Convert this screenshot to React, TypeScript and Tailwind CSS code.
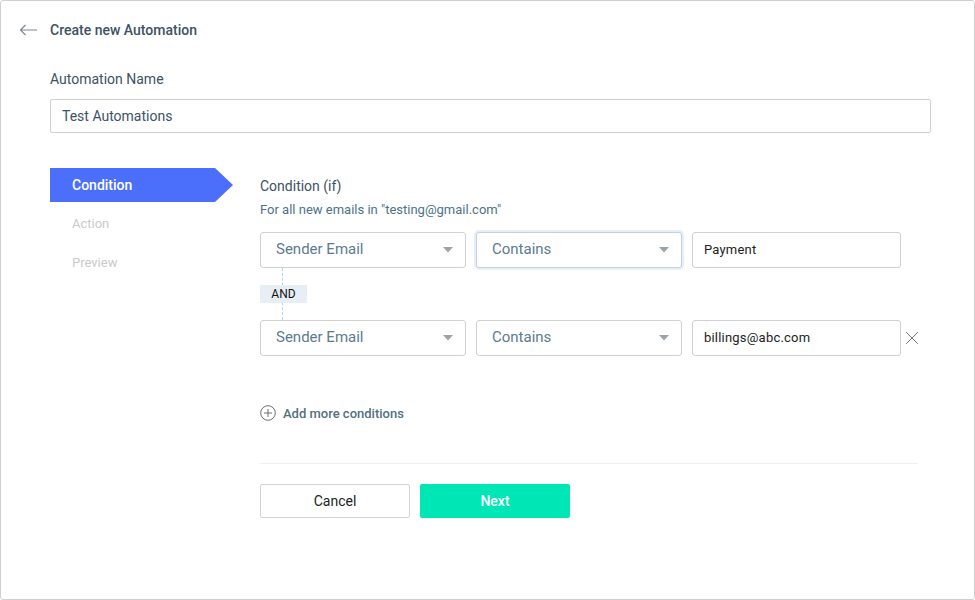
import { X } from "lucide-react";

function Caret() {
  return (
    <svg width="10" height="6" viewBox="0 0 10 6" className="shrink-0">
      <path d="M0 0 L10 0 L5 5.5 Z" fill="#9aa3a9" />
    </svg>
  );
}

function Select({ label, focused }: { label: string; focused?: boolean }) {
  return (
    <div
      className={
        "flex h-9 w-[206px] shrink-0 items-center justify-between rounded-[3px] border bg-white pl-[15px] pr-[12px] text-[15px] text-[#5b7b8e] " +
        (focused ? "border-[#c9cfd4] shadow-[0_0_0_2px_#e3effc]" : "border-[#d0d0d0]")
      }
    >
      <span>{label}</span>
      <Caret />
    </div>
  );
}

function TextBox({ value }: { value: string }) {
  return (
    <div className="flex h-9 w-[209px] shrink-0 items-center rounded-[3px] border border-[#d0d0d0] bg-white px-[11px] text-[13px] tracking-[0.2px] text-[#222]">
      {value}
    </div>
  );
}

export default function App() {
  return (
    <div className="h-[600px] w-[975px] bg-white font-['Roboto','Liberation_Sans',sans-serif]">
      <div className="h-full w-full rounded-[3px] border border-[#cfcfcf] bg-white">
        {/* header */}
        <div className="flex h-[58px] items-center pl-[18px]">
          <svg width="19" height="12" viewBox="0 0 19 12" fill="none">
            <path d="M18 6 H1.5 M6.5 1 L1.5 6 L6.5 11" stroke="#7d8a92" strokeWidth="1.2" />
          </svg>
          <h1 className="ml-[12px] text-[14px] font-medium text-[#3d5262]">Create new Automation</h1>
        </div>

        <div className="pl-[49px] pr-[43px]">
          <div className="mt-[10px] text-[14px] text-[#3d5262]">Automation Name</div>
          <div className="mt-[9px] flex h-[34px] items-center rounded-[2px] border border-[#cfcfcf] px-[11px] text-[14px] text-[#3d5262]">
            Test Automations
          </div>
        </div>

        <div className="mt-[35px] flex pl-[49px]">
          {/* steps */}
          <div className="w-[210px] shrink-0">
            <div className="flex h-[34px] w-[183px] items-center bg-[#4b6ffa] pl-[22px] text-[14px] font-medium text-white [clip-path:polygon(0_0,165px_0,183px_50%,165px_100%,0_100%)]">
              Condition
            </div>
            <div className="mt-[12px] pl-[22px] text-[13px] text-[#c9cacb]">Action</div>
            <div className="mt-[19px] pl-[22px] text-[13px] text-[#c9cacb]">Preview</div>
          </div>

          {/* conditions */}
          <div className="w-[658px]">
            <div className="mt-[8px] text-[14px] text-[#3d5262]">Condition (if)</div>
            <div className="mt-[3px] text-[13px] text-[#4c7385]">For all new emails in "testing@gmail.com"</div>

            <div className="mt-[12px] flex gap-[10px]">
              <Select label="Sender Email" />
              <Select label="Contains" focused />
              <TextBox value="Payment" />
            </div>

            <div className="relative h-[52px]">
              <div className="absolute left-[22px] top-0 h-full border-l border-dashed border-[#a9d9ee]" />
              <div className="absolute left-0 top-[17px] flex h-[18px] w-[47px] items-center justify-center bg-[#e8eef5] text-[12px] text-[#111]">
                AND
              </div>
            </div>

            <div className="flex items-center gap-[10px]">
              <Select label="Sender Email" />
              <Select label="Contains" />
              <TextBox value="billings@abc.com" />
              <X size={22} strokeWidth={1} className="-ml-[10px] shrink-0 text-[#5e6a72]" />
            </div>

            <div className="mt-[48px] flex items-center gap-[7px] text-[13px] font-medium text-[#52707f]">
              <svg width="16" height="16" viewBox="0 0 16 16" fill="none">
                <circle cx="8" cy="8" r="7.3" stroke="#6b6f72" strokeWidth="1" />
                <path d="M8 4 V12 M4 8 H12" stroke="#6b6f72" strokeWidth="1" />
              </svg>
              Add more conditions
            </div>

            <div className="mt-[40px] h-px bg-[#f0f0f0]" />

            <div className="mt-[20px] flex gap-[10px]">
              <button className="h-[34px] w-[150px] rounded-[2px] border border-[#cfd4d8] bg-white text-[14px] text-[#222]">
                Cancel
              </button>
              <button className="h-[34px] w-[150px] rounded-[2px] bg-[#00e6b4] text-[14px] font-medium text-white">
                Next
              </button>
            </div>
          </div>
        </div>
      </div>
    </div>
  );
}
